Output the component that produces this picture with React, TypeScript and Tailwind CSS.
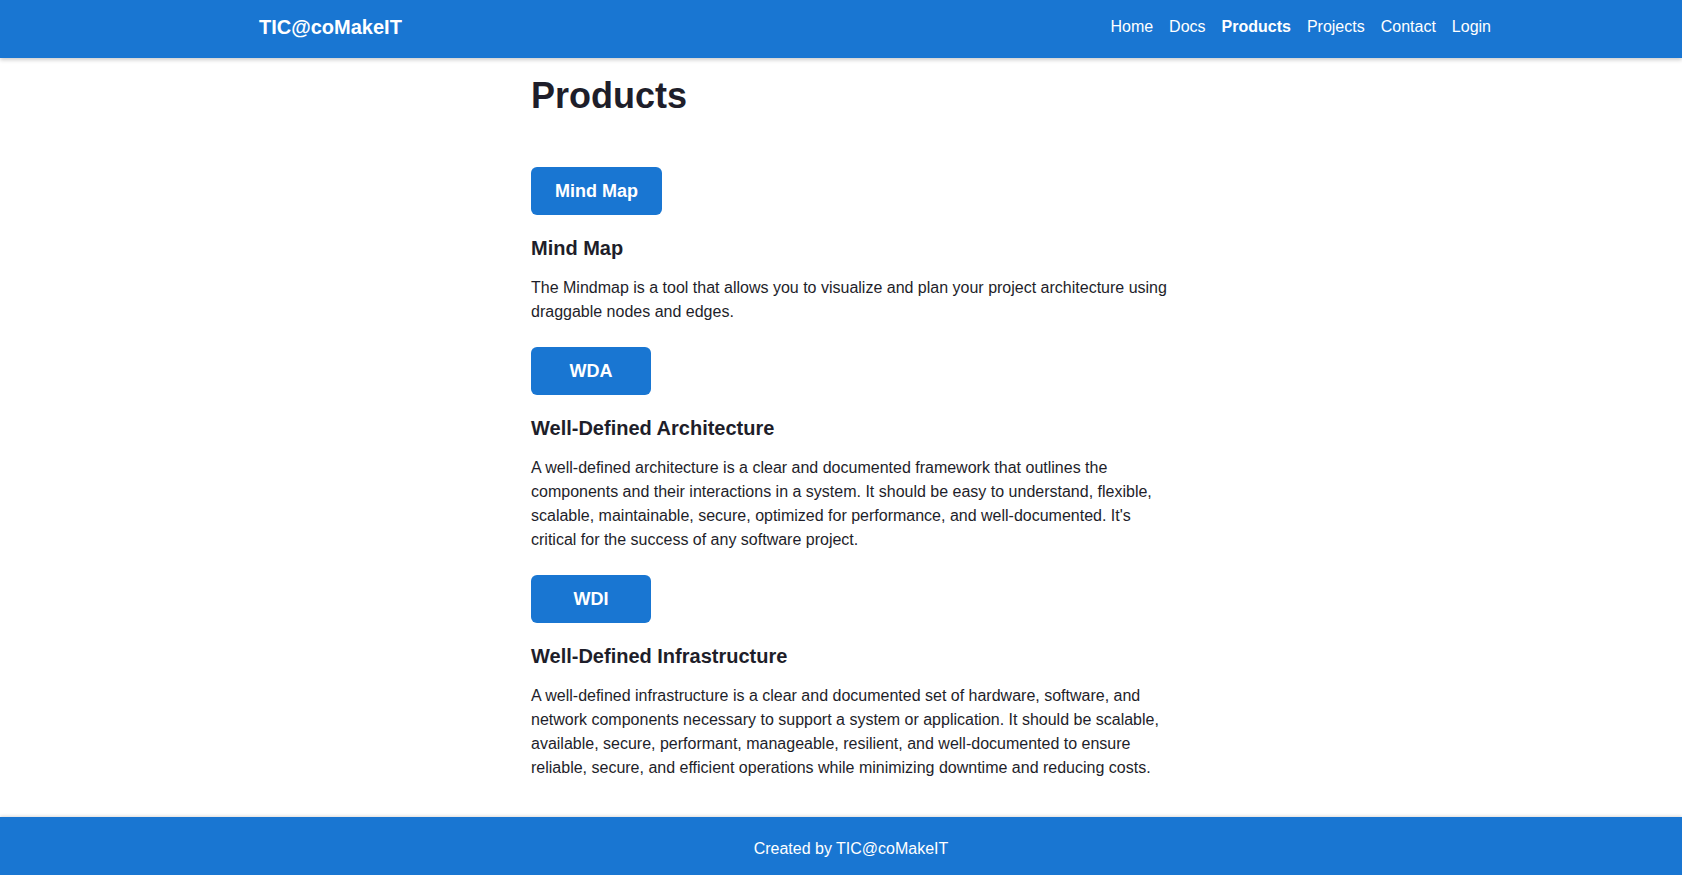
const navLinks = ['Home', 'Docs', 'Products', 'Projects', 'Contact', 'Login']

const products = [
  {
    button: 'Mind Map',
    title: 'Mind Map',
    description:
      'The Mindmap is a tool that allows you to visualize and plan your project architecture using draggable nodes and edges.',
  },
  {
    button: 'WDA',
    title: 'Well-Defined Architecture',
    description:
      "A well-defined architecture is a clear and documented framework that outlines the components and their interactions in a system. It should be easy to understand, flexible, scalable, maintainable, secure, optimized for performance, and well-documented. It's critical for the success of any software project.",
  },
  {
    button: 'WDI',
    title: 'Well-Defined Infrastructure',
    description:
      'A well-defined infrastructure is a clear and documented set of hardware, software, and network components necessary to support a system or application. It should be scalable, available, secure, performant, manageable, resilient, and well-documented to ensure reliable, secure, and efficient operations while minimizing downtime and reducing costs.',
  },
]

export default function App() {
  return (
    <div className="min-h-screen flex flex-col bg-white font-['Liberation_Sans',Arial,sans-serif] text-[#1e1e2a]">
      <header className="relative z-10 h-[58px] bg-[#1976d2] shadow-[0_2px_4px_rgba(0,0,0,0.2)]">
        <div className="h-full flex items-center justify-between pl-[259px] pr-[191px] pb-1">
          <span className="text-[20px] leading-7 font-bold text-white">TIC@coMakeIT</span>
          <nav className="flex items-center gap-4">
            {navLinks.map((link) => (
              <a
                key={link}
                href="#"
                className={`text-base leading-6 text-white ${link === 'Products' ? 'font-bold' : ''}`}
              >
                {link}
              </a>
            ))}
          </nav>
        </div>
      </header>

      <main className="flex-1 pl-5 pb-8">
        <div className="max-w-[640px] mx-auto pt-[18px]">
          <h1 className="text-[36px] leading-[40px] font-bold">Products</h1>
          <div className="mt-[51px] flex flex-col gap-[23px]">
            {products.map((product) => (
              <section key={product.button}>
                <button className="min-w-[120px] px-6 py-[10px] rounded-md bg-[#1976d2] text-white text-[18px] leading-7 font-bold">
                  {product.button}
                </button>
                <h2 className="mt-[19px] text-[20px] leading-7 font-bold">{product.title}</h2>
                <p className="mt-[14px] text-base leading-6">{product.description}</p>
              </section>
            ))}
          </div>
        </div>
      </main>

      <footer className="h-[58px] bg-[#1976d2] shadow-[0_-1px_3px_rgba(0,0,0,0.15)] pl-5 pt-5 text-center text-base leading-6 text-white">
        Created by TIC@coMakeIT
      </footer>
    </div>
  )
}
